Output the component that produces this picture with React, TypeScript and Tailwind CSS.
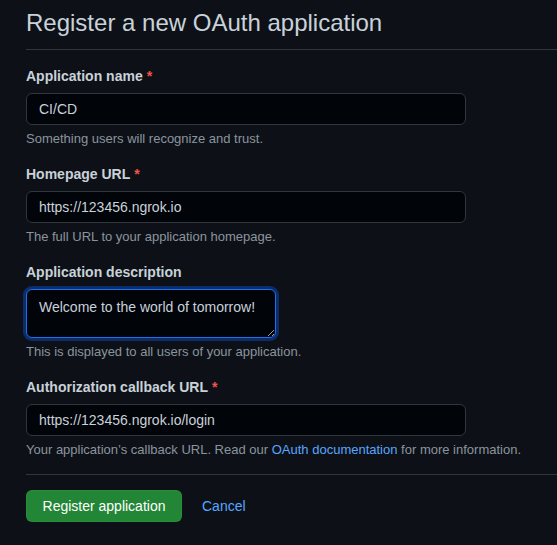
import React from "react";

const Field: React.FC<{
  label: string;
  required?: boolean;
  children: React.ReactNode;
  note: React.ReactNode;
}> = ({ label, required, children, note }) => (
  <div className="mt-4">
    <label className="block text-[14px] leading-[21px] font-bold text-[#c9d1d9]">
      {label}
      {required && <span className="text-[#f85149] ml-1">*</span>}
    </label>
    <div className="mt-[6px]">{children}</div>
    <p className="mt-[5px] text-[13px] leading-[18px] text-[#8b949e]">{note}</p>
  </div>
);

const inputCls =
  "block w-[440px] h-8 px-3 rounded-md border border-[#30363d] bg-[#010409] text-[14px] text-[#c9d1d9] outline-none";

export default function App() {
  return (
    <div
      className="min-h-[545px] bg-[#0d1117] pl-[26px] pt-2 overflow-hidden"
      style={{ fontFamily: '"Liberation Sans", Arial, sans-serif' }}
    >
      {/* Header */}
      <div className="pb-[11px] border-b border-[#30363d]">
        <h2 className="text-[24px] leading-[30px] font-normal text-[#c9d1d9]">
          Register a new OAuth application
        </h2>
      </div>

      <form onSubmit={(e) => e.preventDefault()}>
        <Field label="Application name" required note="Something users will recognize and trust.">
          <input className={inputCls} defaultValue="CI/CD" />
        </Field>

        <Field label="Homepage URL" required note="The full URL to your application homepage.">
          <input className={inputCls} defaultValue="https://123456.ngrok.io" />
        </Field>

        <Field label="Application description" note="This is displayed to all users of your application.">
          <textarea
            className="block w-[250px] h-[49px] px-3 py-[7px] rounded-md border border-[#1f6feb] shadow-[0_0_0_3px_#0c2d6b] bg-[#010409] text-[14px] leading-[20px] text-[#c9d1d9] outline-none"
            defaultValue="Welcome to the world of tomorrow!"
          />
        </Field>

        <Field
          label="Authorization callback URL"
          required
          note={
            <>
              Your application’s callback URL. Read our{" "}
              <a href="#" className="text-[#58a6ff]">
                OAuth documentation
              </a>{" "}
              for more information.
            </>
          }
        >
          <input className={inputCls} defaultValue="https://123456.ngrok.io/login" />
        </Field>

        <div className="mt-[15px] border-t border-[#30363d]" />

        <div className="mt-[15px] flex items-center">
          <button
            type="submit"
            className="h-8 w-[156px] rounded-md bg-[#238636] border border-[#2ea043]/40 text-[14px] text-white"
          >
            Register application
          </button>
          <a href="#" className="ml-5 text-[14px] text-[#58a6ff]">
            Cancel
          </a>
        </div>
      </form>
    </div>
  );
}
